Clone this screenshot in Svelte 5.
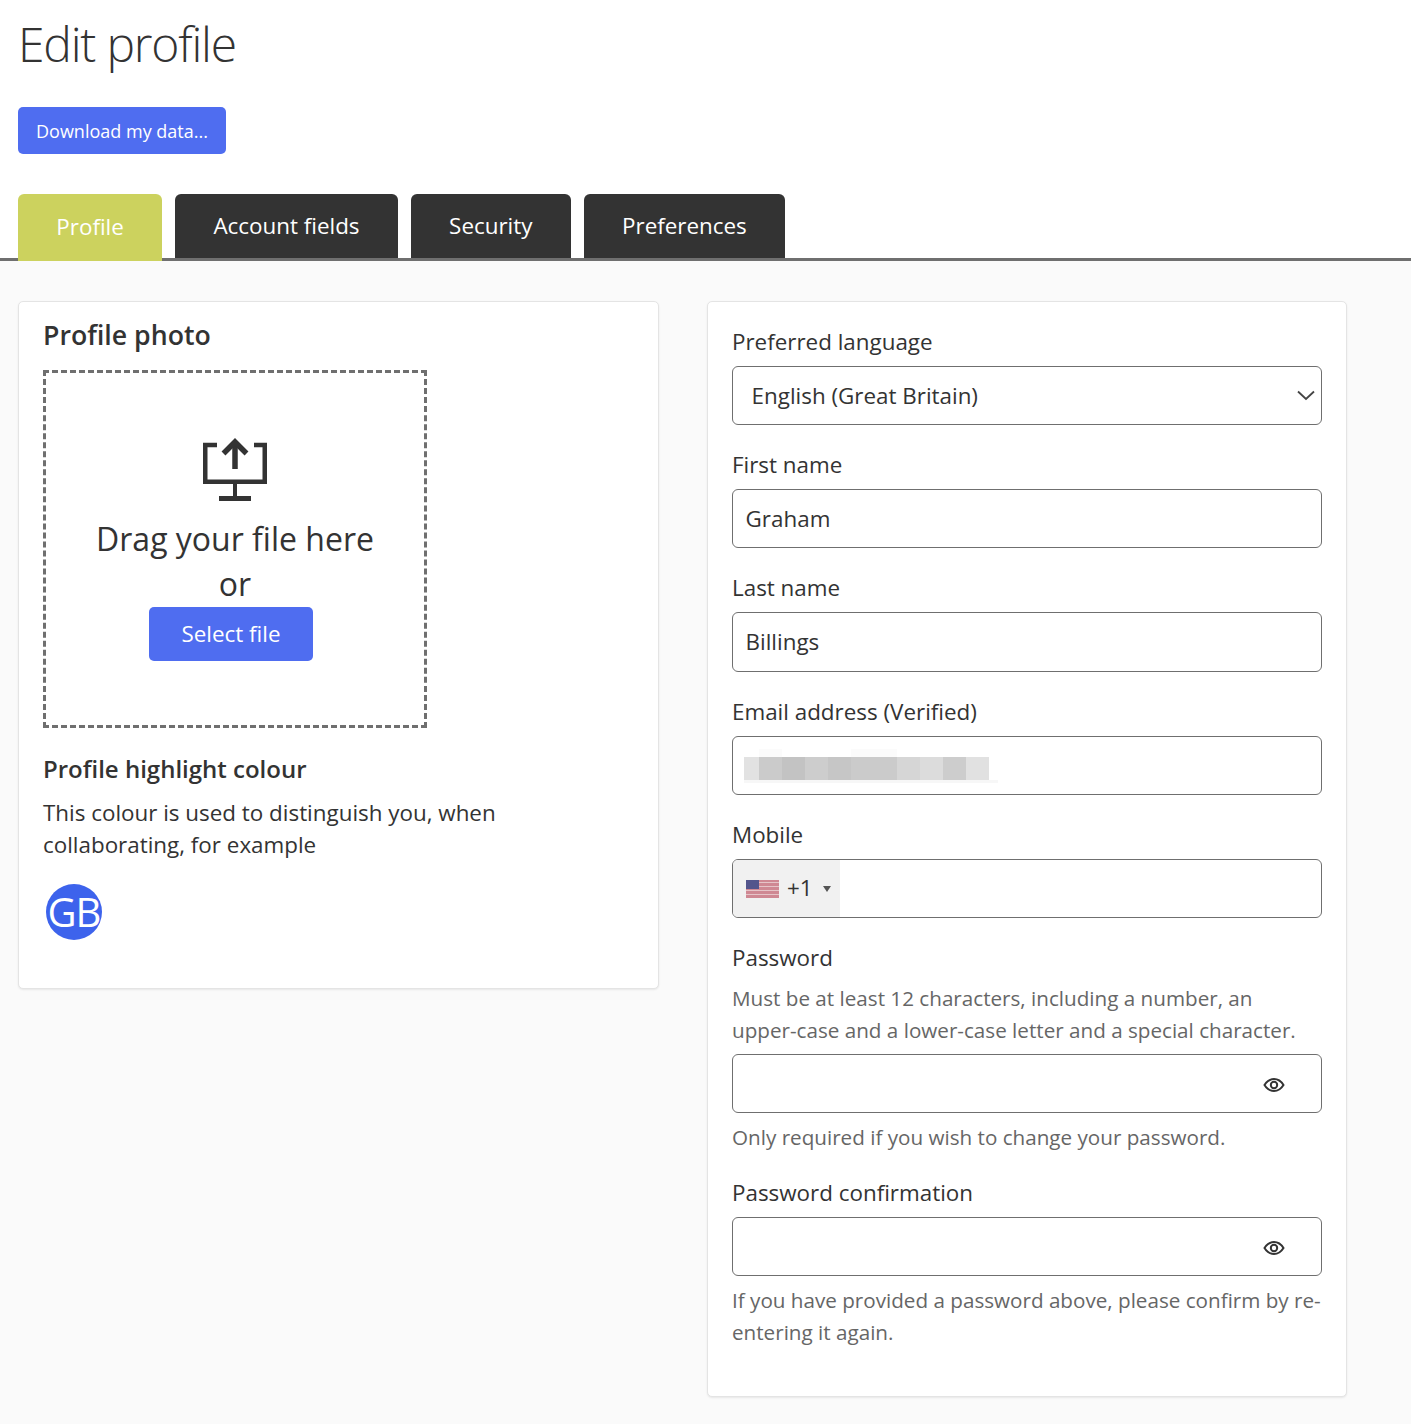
<script>
  const tabs = ['Account fields', 'Security', 'Preferences']
  const blurCells = [[15, '#e2e2e2'], [23, '#cbcbcb'], [23, '#c3c3c3'], [23, '#cdcdcd'], [23, '#c6c6c6'], [46, '#cbcbcb'], [23, '#d6d6d6'], [23, '#dcdcdc'], [23, '#cdcdcd'], [23, '#e1e1e1']]
</script>

<div class="page">
  <header class="top">
    <h1>Edit profile</h1>
    <button class="btn small">Download my data...</button>
    <nav class="tabs">
      <span class="tab active">Profile</span>
      {#each tabs as tab}
        <span class="tab">{tab}</span>
      {/each}
    </nav>
  </header>

  <main class="columns">
    <section class="panel left">
      <h2>Profile photo</h2>
      <div class="dropzone">
        <svg class="upload" width="66" height="64" viewBox="0 0 66 64" fill="none" stroke="#333">
          <path d="M15 7H3.250V43.700H62.750V7H52" stroke-width="4.500" />
          <path d="M33 31V5" stroke-width="5.500" />
          <path d="M21.500 15.500L33 4L44.500 15.500" stroke-width="5.500" />
          <path d="M33 44V59" stroke-width="4" />
          <path d="M17 60.500H49" stroke-width="5" />
        </svg>
        <div class="drag">Drag your file here</div>
        <div class="or">or</div>
        <button class="btn select">Select file</button>
      </div>
      <h3>Profile highlight colour</h3>
      <p class="desc">This colour is used to distinguish you, when collaborating, for example</p>
      <div class="avatar">GB</div>
    </section>

    <section class="panel right">
      <div class="field">
        <span class="label">Preferred language</span>
        <div class="input select-box">
          <span>English (Great Britain)</span>
          <svg width="18" height="11" viewBox="0 0 18 11" fill="none" stroke="#444" stroke-width="1.800">
            <path d="M1 1.500L9 9L17 1.500" />
          </svg>
        </div>
      </div>
      <div class="field">
        <span class="label">First name</span>
        <div class="input">Graham</div>
      </div>
      <div class="field">
        <span class="label">Last name</span>
        <div class="input tall">Billings</div>
      </div>
      <div class="field">
        <span class="label">Email address (Verified)</span>
        <div class="input email">
          <div class="blur">
            <div class="blur-top"><i></i><i></i></div>
            <div class="blur-main">
              {#each blurCells as [w, c]}
                <i style="width:{w}px;background:{c}"></i>
              {/each}
            </div>
            <div class="blur-bottom"></div>
          </div>
        </div>
      </div>
      <div class="field">
        <span class="label">Mobile</span>
        <div class="input phone">
          <div class="dial">
            <svg width="33" height="18" viewBox="0 0 33 18">
              <rect width="33" height="18" fill="#cf8893" />
              <path d="M0 2.500H33M0 6.500H33M0 10.500H33M0 14.500H33" stroke="#e6c4c8" stroke-width="1.200" />
              <rect width="13" height="9" fill="#53558c" />
            </svg>
            <span>+1</span>
            <i class="caret"></i>
          </div>
        </div>
      </div>
      <div class="field">
        <span class="label">Password</span>
        <p class="help above">Must be at least 12 characters, including a number, an<br />upper-case and a lower-case letter and a special character.</p>
        <div class="input secret">
          <svg width="22" height="16" viewBox="0 0 22 16" fill="none" stroke="#333" stroke-width="2">
            <path d="M1.500 8C4 4 7 2 11 2C15 2 18 4 20.500 8C18 12 15 14 11 14C7 14 4 12 1.500 8Z" />
            <circle cx="11" cy="8" r="3.200" />
          </svg>
        </div>
        <p class="help below">Only required if you wish to change your password.</p>
      </div>
      <div class="field last">
        <span class="label">Password confirmation</span>
        <div class="input secret">
          <svg width="22" height="16" viewBox="0 0 22 16" fill="none" stroke="#333" stroke-width="2">
            <path d="M1.500 8C4 4 7 2 11 2C15 2 18 4 20.500 8C18 12 15 14 11 14C7 14 4 12 1.500 8Z" />
            <circle cx="11" cy="8" r="3.200" />
          </svg>
        </div>
        <p class="help below">If you have provided a password above, please confirm by re-entering it again.</p>
      </div>
    </section>
  </main>
</div>

<style>
  :global(body) {
    margin: 0;
    background: #fafafa;
  }

  .page {
    font-family: 'Open Sans', 'Noto Sans', sans-serif;
    color: #333;
    min-height: 1424px;
  }

  .top {
    background: #fff;
    padding: 0 0 0 18px;
    border-bottom: 3px solid #6f6f6f;
    height: 258px;
    box-sizing: content-box;
  }

  h1 {
    margin: 0;
    padding-top: 12px;
    font-size: 48px;
    line-height: 64px;
    font-weight: 300;
    letter-spacing: -1.200px;
    height: 95px;
    box-sizing: border-box;
  }

  .btn {
    display: block;
    border: 0;
    background: #4f6df0;
    color: #fff;
    font-family: inherit;
    border-radius: 5px;
    padding: 0;
  }

  .small {
    margin-top: 12px;
    width: 208px;
    height: 47px;
    font-size: 18px;
  }

  .tabs {
    display: flex;
    gap: 13px;
    margin-top: 40px;
    align-items: flex-start;
  }

  .tab {
    background: #333;
    color: #fff;
    height: 64px;
    line-height: 63px;
    padding: 0 38.300px;
    font-size: 22.400px;
    border-radius: 6px 6px 0 0;
  }

  .tab.active {
    background: #ccd25e;
    height: 67px;
    line-height: 66px;
    padding: 0 38.300px;
  }

  .columns {
    display: flex;
    align-items: flex-start;
    gap: 48px;
    padding: 40px 0 0 18px;
  }

  .panel {
    background: #fff;
    border: 1px solid #e4e4e4;
    border-radius: 5px;
    box-shadow: 0 1px 2px rgba(0, 0, 0, 0.08);
    box-sizing: border-box;
    padding: 0 24px;
  }

  .left {
    width: 641px;
    height: 688px;
  }

  .right {
    width: 640px;
    height: 1096px;
    padding-top: 24px;
  }

  h2 {
    margin: 0;
    font-size: 26.700px;
    font-weight: 600;
    line-height: 38px;
    padding-top: 14px;
  }

  .dropzone {
    margin-top: 16px;
    width: 384px;
    height: 358px;
    box-sizing: border-box;
    border: 3px dashed #6f6f6f;
    display: flex;
    flex-direction: column;
    align-items: center;
    padding-top: 65px;
  }

  .drag {
    font-size: 32px;
    line-height: 46px;
    margin-top: 14px;
  }

  .or {
    font-size: 32px;
    line-height: 43px;
    margin-bottom: 2px;
  }

  .select {
    width: 164px;
    height: 54px;
    font-size: 22.400px;
    margin-right: 8px;
    padding-bottom: 2px;
  }

  h3 {
    margin: 0;
    padding-top: 24px;
    font-size: 24px;
    font-weight: 600;
    line-height: 33px;
  }

  .desc {
    margin: 12px 0 0;
    font-size: 22.400px;
    line-height: 32px;
    width: 480px;
  }

  .avatar {
    margin: 23px 0 0 3px;
    width: 56px;
    height: 56px;
    border-radius: 50%;
    background: #3d63ec;
    color: #fff;
    font-size: 40px;
    line-height: 56px;
    text-align: center;
    letter-spacing: -1px;
  }

  .field {
    margin-bottom: 24px;
  }

  .field.last {
    margin-bottom: 0;
  }

  .label {
    display: block;
    font-size: 22.400px;
    line-height: 32px;
    margin-bottom: 8px;
  }

  .input {
    box-sizing: border-box;
    height: 59px;
    border: 1px solid #6f6f6f;
    border-radius: 6px;
    background: #fff;
    font-size: 22.400px;
    line-height: 57px;
    padding: 0 12.600px;
  }

  .input.tall {
    height: 60px;
  }

  .select-box {
    display: flex;
    justify-content: space-between;
    align-items: center;
    padding: 0 6px 0 18.600px;
  }

  .email {
    display: flex;
    align-items: center;
    padding: 0 11px;
  }

  .blur-top {
    display: flex;
    height: 8px;
  }

  .blur-top i {
    display: block;
    width: 23px;
    margin-left: 15px;
    background: #fbfbfb;
  }

  .blur-top i + i {
    width: 46px;
    margin-left: 69px;
  }

  .blur-main {
    display: flex;
    height: 23px;
  }

  .blur-bottom {
    width: 254px;
    height: 3px;
    background: #f7f7f7;
  }

  .phone {
    padding: 0;
    overflow: hidden;
  }

  .dial {
    display: flex;
    align-items: center;
    width: 107px;
    height: 100%;
    background: #f1f1f1;
    padding-left: 13px;
    box-sizing: border-box;
  }

  .dial span {
    margin: 0 0 2px 8px;
  }

  .caret {
    margin-left: 10px;
    border-left: 4px solid transparent;
    border-right: 4px solid transparent;
    border-top: 6px solid #555;
  }

  .secret {
    display: flex;
    align-items: center;
    justify-content: flex-end;
    padding-right: 36px;
  }

  .secret svg {
    margin-top: 3px;
  }

  .help {
    margin: 0;
    font-size: 20.650px;
    line-height: 32px;
    color: #666;
  }

  .help.above {
    margin: 1px 0 8px;
  }

  .help.below {
    margin-top: 8px;
  }
</style>
